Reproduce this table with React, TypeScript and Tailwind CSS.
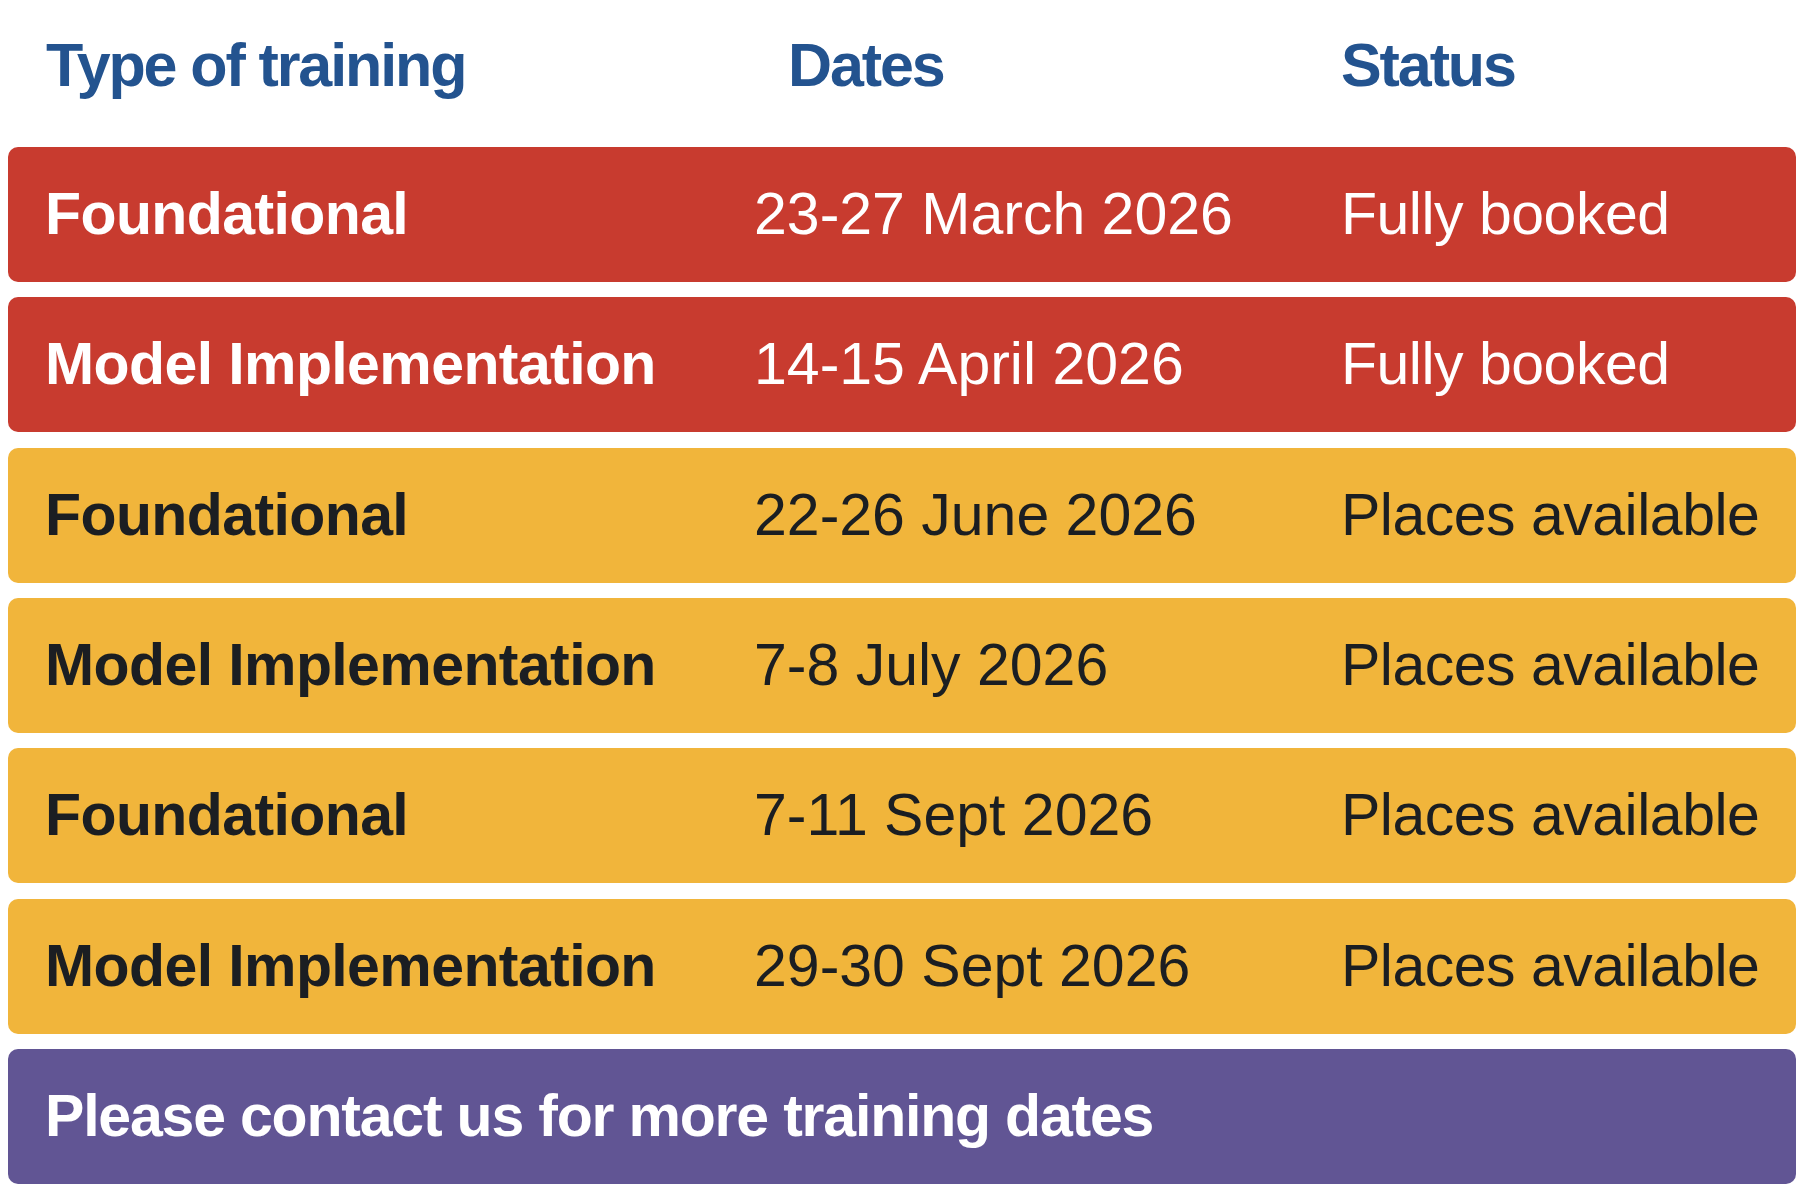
import React from 'react';

type Row = {
  type: string;
  dates: string;
  status: string;
  tone: 'red' | 'yellow';
};

const rows: Row[] = [
  { type: 'Foundational', dates: '23-27 March 2026', status: 'Fully booked', tone: 'red' },
  { type: 'Model Implementation', dates: '14-15 April 2026', status: 'Fully booked', tone: 'red' },
  { type: 'Foundational', dates: '22-26 June 2026', status: 'Places available', tone: 'yellow' },
  { type: 'Model Implementation', dates: '7-8 July 2026', status: 'Places available', tone: 'yellow' },
  { type: 'Foundational', dates: '7-11 Sept 2026', status: 'Places available', tone: 'yellow' },
  { type: 'Model Implementation', dates: '29-30 Sept 2026', status: 'Places available', tone: 'yellow' },
];

const TrainingRow: React.FC<{ row: Row }> = ({ row }) => {
  const red = row.tone === 'red';
  return (
    <div
      className={
        red
          ? 'h-[135px] rounded-[10px] bg-[#c83b2f] text-white grid grid-cols-[709px_587px_1fr] items-center pl-[37px]'
          : 'h-[135px] rounded-[10px] bg-[#f1b53b] text-[#1b1e22] grid grid-cols-[709px_587px_1fr] items-center pl-[37px]'
      }
    >
      <div className="text-[59px] leading-none font-bold tracking-[-0.6px]">{row.type}</div>
      <div className="text-[59px] leading-none font-normal tracking-[0px]">{row.dates}</div>
      <div className="text-[59px] leading-none font-normal tracking-[-0.5px]">{row.status}</div>
    </div>
  );
};

export default function App() {
  return (
    <div className="w-[1811px] h-[1200px] bg-white font-['Liberation_Sans',Arial,sans-serif]">
      {/* Column headings */}
      <div className="h-[147px] pt-[35px] pl-[46px] grid grid-cols-[742px_553px_1fr] text-[61px] leading-none font-bold tracking-[-2.1px] text-[#23538f]">
        <div>Type of training</div>
        <div>Dates</div>
        <div>Status</div>
      </div>

      {/* Schedule rows */}
      <div className="ml-[8px] w-[1788px] flex flex-col gap-[15.33px]">
        {rows.map((row, idx) => (
          <TrainingRow key={idx} row={row} />
        ))}
        <div className="h-[135px] rounded-[10px] bg-[#615594] text-white flex items-center pl-[37px]">
          <div className="text-[59px] leading-none font-bold tracking-[-1.2px]">
            Please contact us for more training dates
          </div>
        </div>
      </div>
    </div>
  );
}
